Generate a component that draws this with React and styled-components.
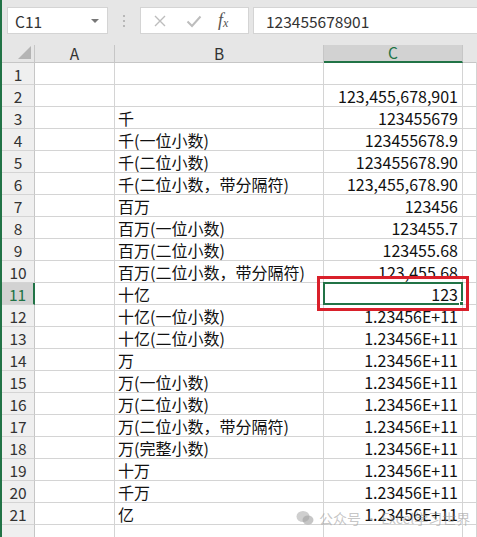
import React from 'react'
import styled, { createGlobalStyle } from 'styled-components'

const GlobalStyle = createGlobalStyle`
  html, body {
    margin: 0;
    padding: 0;
    background: #e6e6e6;
  }
  body {
    font-family: "Noto Sans CJK SC", "Noto Sans", sans-serif;
    overflow: hidden;
  }
`

const Sheet = styled.div`
  width: 477px;
  height: 537px;
  border-left: 2px solid #217346;
  box-sizing: border-box;
  background: #e6e6e6;
  position: relative;
  overflow: hidden;
`

const FormulaBar = styled.div`
  display: flex;
  height: 45px;
  padding: 7px 0 0 5px;
  box-sizing: border-box;
  align-items: flex-start;
`

const NameBox = styled.div`
  width: 101px;
  height: 27px;
  box-sizing: border-box;
  background: #fff;
  border: 1px solid #d4d4d4;
  display: flex;
  align-items: center;
  justify-content: space-between;
  padding: 0 8px 0 7px;
  font-size: 15.5px;
  color: #333;
`

const Caret = styled.span`
  width: 0;
  height: 0;
  border-left: 4px solid transparent;
  border-right: 4px solid transparent;
  border-top: 4px solid #777;
`

const Grip = styled.div`
  width: 32px;
  height: 27px;
  display: flex;
  flex-direction: column;
  align-items: center;
  justify-content: center;
  gap: 3px;
  span {
    width: 2px;
    height: 2px;
    background: #b8b8b8;
  }
`

const ActionBox = styled.div`
  width: 109px;
  height: 27px;
  box-sizing: border-box;
  background: #fff;
  border: 1px solid #d4d4d4;
  display: flex;
  align-items: center;
  padding-left: 12px;
  gap: 19px;
`

const Fx = styled.span`
  font-family: "Liberation Serif", serif;
  font-style: italic;
  font-size: 18px;
  color: #555;
  margin-left: -3px;
  sub {
    font-size: 12px;
    vertical-align: -1px;
  }
`

const Input = styled.div`
  flex: 1;
  height: 27px;
  margin-left: 4px;
  box-sizing: border-box;
  background: #fff;
  border: 1px solid #d4d4d4;
  border-right: none;
  display: flex;
  align-items: center;
  padding-left: 12px;
  font-size: 15.5px;
  color: #333;
`

const Grid = styled.div`
  display: grid;
  grid-template-columns: 33px 80px 209px 139px 1fr;
  grid-template-rows: 18px;
  grid-auto-rows: 22px;
`

const Corner = styled.div`
  position: relative;
  border-right: 1px solid #c6c6c6;
  border-bottom: 1px solid #c6c6c6;
  &::after {
    content: '';
    position: absolute;
    right: 3px;
    bottom: 3px;
    border-left: 13px solid transparent;
    border-bottom: 13px solid #b4b4b4;
  }
`

const ColHead = styled.div`
  display: flex;
  align-items: center;
  justify-content: center;
  font-size: 15.5px;
  line-height: 1;
  color: ${p => (p.$active ? '#217346' : '#333')};
  background: ${p => (p.$active ? '#d2d2d2' : '#e6e6e6')};
  border-right: 1px solid ${p => (p.$blank ? 'transparent' : '#c6c6c6')};
  border-bottom: ${p => (p.$active ? '2px solid #217346' : '1px solid #c6c6c6')};
`

const RowHead = styled.div`
  display: flex;
  align-items: center;
  justify-content: center;
  font-size: 15.5px;
  color: ${p => (p.$active ? '#217346' : '#333')};
  background: ${p => (p.$active ? '#d2d2d2' : '#efefef')};
  border-right: ${p => (p.$active ? '2px solid #217346' : '1px solid #c6c6c6')};
  border-bottom: 1px solid #d4d4d4;
`

const Cell = styled.div`
  position: relative;
  display: flex;
  align-items: center;
  justify-content: ${p => (p.$num ? 'flex-end' : 'flex-start')};
  padding: ${p => (p.$num ? '0 4px 0 0' : '0 0 0 3px')};
  background: #fff;
  font-size: 16px;
  color: #111;
  white-space: nowrap;
  border-right: 1px solid #d4d4d4;
  border-bottom: 1px solid #d4d4d4;
`

const Selection = styled.div`
  position: absolute;
  left: -1px;
  top: -1px;
  right: -1px;
  bottom: -1px;
  border: 2px solid #217346;
  &::after {
    content: '';
    position: absolute;
    right: -5px;
    bottom: -5px;
    width: 5px;
    height: 5px;
    background: #217346;
    border: 1px solid #fff;
  }
`

const Highlight = styled.div`
  position: absolute;
  left: -7px;
  top: -7px;
  right: -7px;
  bottom: -7px;
  border: 3px solid #d9202a;
  z-index: 2;
`

const Watermark = styled.div`
  position: absolute;
  left: 294px;
  top: 508px;
  display: flex;
  align-items: center;
  gap: 5px;
  font-size: 14px;
  color: rgba(150, 150, 150, 0.55);
  pointer-events: none;
  z-index: 3;
`

const rows = [
  ['', ''],
  ['', '123,455,678,901'],
  ['千', '123455679'],
  ['千(一位小数)', '123455678.9'],
  ['千(二位小数)', '123455678.90'],
  ['千(二位小数，带分隔符)', '123,455,678.90'],
  ['百万', '123456'],
  ['百万(一位小数)', '123455.7'],
  ['百万(二位小数)', '123455.68'],
  ['百万(二位小数，带分隔符)', '123,455.68'],
  ['十亿', '123'],
  ['十亿(一位小数)', '1.23456E+11'],
  ['十亿(二位小数)', '1.23456E+11'],
  ['万', '1.23456E+11'],
  ['万(一位小数)', '1.23456E+11'],
  ['万(二位小数)', '1.23456E+11'],
  ['万(二位小数，带分隔符)', '1.23456E+11'],
  ['万(完整小数)', '1.23456E+11'],
  ['十万', '1.23456E+11'],
  ['千万', '1.23456E+11'],
  ['亿', '1.23456E+11'],
  ['', ''],
]

const Cross = () => (
  <svg width="14" height="14" viewBox="0 0 14 14">
    <path d="M2 2 L12 12 M12 2 L2 12" stroke="#bdbdbd" strokeWidth="1.4" fill="none" />
  </svg>
)

const Check = () => (
  <svg width="16" height="14" viewBox="0 0 16 14">
    <path d="M1.5 7.5 L6 12 L14.5 2.5" stroke="#bdbdbd" strokeWidth="2" fill="none" />
  </svg>
)

const WeChat = () => (
  <svg width="18" height="16" viewBox="0 0 18 16">
    <ellipse cx="7" cy="6.5" rx="6.5" ry="5.5" fill="rgba(160,160,160,0.5)" />
    <ellipse cx="12" cy="10" rx="5.5" ry="4.6" fill="rgba(160,160,160,0.6)" />
  </svg>
)

export default function App() {
  return (
    <Sheet>
      <GlobalStyle />
      <FormulaBar>
        <NameBox>C11<Caret /></NameBox>
        <Grip><span /><span /><span /></Grip>
        <ActionBox>
          <Cross />
          <Check />
          <Fx>f<sub>x</sub></Fx>
        </ActionBox>
        <Input>123455678901</Input>
      </FormulaBar>
      <Grid>
        <Corner />
        <ColHead>A</ColHead>
        <ColHead>B</ColHead>
        <ColHead $active>C</ColHead>
        <ColHead $blank />
        {rows.map(([label, value], i) => {
          const n = i + 1
          const active = n === 11
          return (
            <React.Fragment key={n}>
              <RowHead $active={active}>{n < 22 ? n : ''}</RowHead>
              <Cell />
              <Cell>{label}</Cell>
              <Cell $num>
                {value}
                {active && <Selection />}
                {active && <Highlight />}
              </Cell>
              <Cell />
            </React.Fragment>
          )
        })}
      </Grid>
      <Watermark>
        <WeChat />
        公众号 · Excel学习世界
      </Watermark>
    </Sheet>
  )
}
